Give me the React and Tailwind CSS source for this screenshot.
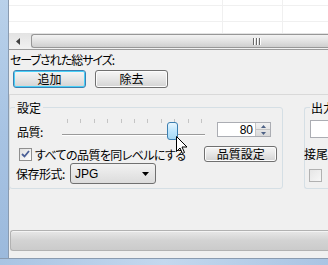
import React from "react";

const jp = { fontFamily: '"Noto Sans CJK JP", "Noto Sans", sans-serif' };

function Btn({ children, className = "", def = false }) {
  return (
    <div
      className={
        "flex items-center justify-center rounded-[3px] border bg-gradient-to-b from-[#f6f6f6] via-[#e6e6e6] to-[#d3d3d3] text-[12px] leading-none text-black " +
        (def ? "border-[#3c7fb1] shadow-[inset_0_0_0_1px_#48d0f8]" : "border-[#707070] shadow-[inset_0_0_0_1px_#fcfcfc]") +
        " " +
        className
      }
    >
      {children}
    </div>
  );
}

export default function App() {
  const ticks = [0, 1, 2, 3, 4, 5, 6, 7, 8, 9, 10];
  return (
    <div
      className="relative flex h-[265px] w-[328px] overflow-hidden bg-[#f0f0f0] text-black [font-feature-settings:'palt']"
      style={jp}
    >
      {/* left window frame */}
      <div className="w-[9px] shrink-0 bg-gradient-to-b from-[#b9d1ea] via-[#a7c3e3] to-[#9bb9dc] border-r border-[#8a9bb0]" />
      <div className="flex min-w-0 flex-1 flex-col">
        {/* list view */}
        <div className="relative h-[33px] shrink-0 bg-white">
          <div className="absolute left-0 right-0 top-[5px] h-px bg-[#f0f0f0]" />
          <div className="absolute left-0 right-0 top-[21px] h-px bg-[#f0f0f0]" />
          <div className="absolute bottom-0 top-0 left-[213px] w-px bg-[#f0f0f0]" />
          <div className="absolute bottom-0 top-0 left-[273px] w-px bg-[#f0f0f0]" />
        </div>
        {/* horizontal scrollbar */}
        <div className="flex h-[17px] shrink-0 items-stretch border-b border-[#9a9a9a] bg-gradient-to-b from-[#e3e3e3] to-[#f1f1f1]">
          <div className="flex w-[17px] items-center justify-center">
            <svg width="4" height="7" viewBox="0 0 4 7">
              <path d="M4 0 L0 3.5 L4 7 Z" fill="#404040" />
            </svg>
          </div>
          <div className="my-px ml-[5px] flex flex-1 items-center justify-start rounded-l-[3px] border border-r-0 border-[#979797] bg-gradient-to-b from-[#f3f3f3] via-[#e2e2e2] to-[#cfcfcf] pl-[221px]">
            <svg width="9" height="7" viewBox="0 0 9 7">
              <rect x="0" y="0" width="1" height="7" fill="#6a6a6a" />
              <rect x="3" y="0" width="1" height="7" fill="#6a6a6a" />
              <rect x="6" y="0" width="1" height="7" fill="#6a6a6a" />
              <rect x="1" y="0" width="1" height="7" fill="#ffffff" />
              <rect x="4" y="0" width="1" height="7" fill="#ffffff" />
              <rect x="7" y="0" width="1" height="7" fill="#ffffff" />
            </svg>
          </div>
        </div>

        <div className="mt-[3px] h-[13px] whitespace-nowrap pl-px text-[12px] leading-[13px] tracking-[-1px]">
          セーブされた総サイズ:
        </div>
        <div className="mt-[4px] flex gap-[9px] pl-[4px]">
          <Btn def className="h-[18px] w-[73px]">追加</Btn>
          <Btn className="h-[18px] w-[73px]">除去</Btn>
        </div>

        {/* lower panel */}
        <div className="mt-[6px] flex h-[96px] gap-[21px] border-l border-t border-[#d9d9d9] pt-[12px]">
          {/* 設定 group */}
          <div className="relative ml-[-1px] h-[82px] w-[274px] shrink-0 rounded-[3px] border border-[#d5dfe5]">
            <div className="absolute left-[5px] top-[-7px] bg-[#f0f0f0] px-[2px] text-[12px] leading-[13px]">
              設定
            </div>
            {/* quality row */}
            <div className="mt-[10px] flex items-start pl-[7px]">
              <div className="mt-[7px] w-[40px] text-[12px] leading-[13px] tracking-[-0.5px]">品質:</div>
              <div className="relative ml-[5px] h-[24px] w-[143px]">
                {ticks.map((t) => (
                  <div
                    key={t}
                    className="absolute top-[1px] h-[4px] w-px bg-[#c4c4c4]"
                    style={{ left: 5 + t * 13.4 }}
                  />
                ))}
                <div className="absolute left-0 right-0 top-[16px] h-[2px] border-t border-[#9a9a9a] bg-white" />
                <div className="absolute left-[105px] top-[4px] h-[18px] w-[11px] rounded-[3px] border border-[#3c7fb1] bg-gradient-to-b from-[#eaf6fd] via-[#bee6fd] to-[#a7d9f5]" />
              </div>
              <div className="ml-[12px] mt-[4px] flex h-[15px] w-[54px] border border-[#abadb3] bg-white">
                <div className="flex-1 pr-[2px] text-right text-[12px] leading-[14px]" style={{ fontFamily: '"Liberation Sans", sans-serif' }}>
                  80
                </div>
                <div className="flex w-[15px] flex-col border-l border-[#c5c5c5] bg-gradient-to-b from-[#f2f2f2] to-[#d9d9d9]">
                  <div className="flex flex-1 items-center justify-center border-b border-[#c5c5c5]">
                    <svg width="5" height="3" viewBox="0 0 5 3"><path d="M0 3 L2.5 0 L5 3 Z" fill="#4d6185" /></svg>
                  </div>
                  <div className="flex flex-1 items-center justify-center">
                    <svg width="5" height="3" viewBox="0 0 5 3"><path d="M0 0 L2.5 3 L5 0 Z" fill="#4d6185" /></svg>
                  </div>
                </div>
              </div>
            </div>
            {/* checkbox row */}
            <div className="mt-[4px] flex items-center pl-[9px]">
              <div className="flex h-[13px] w-[13px] items-center justify-center border border-[#8f8f8f] bg-gradient-to-br from-[#e0e0e0] to-[#ffffff]">
                <svg width="9" height="8" viewBox="0 0 9 8">
                  <path d="M1 4 L3.5 6.5 L8 1" stroke="#4a5f97" strokeWidth="1.8" fill="none" />
                </svg>
              </div>
              <div className="ml-[3px] whitespace-nowrap text-[12px] leading-[13px] tracking-[-0.6px]">すべての品質を同レベルにする</div>
              <Btn className="ml-[19px] h-[16px] w-[73px]">品質設定</Btn>
            </div>
            {/* save format row */}
            <div className="mt-[1px] flex items-center pl-[6px]">
              <div className="w-[54px] whitespace-nowrap text-[12px] leading-[13px] tracking-[-0.5px]">保存形式:</div>
              <div className="flex h-[21px] w-[86px] items-center rounded-[3px] border border-[#707070] bg-gradient-to-b from-[#f2f2f2] to-[#dcdcdc] pl-[4px] pr-[6px]">
                <div className="flex-1 text-[12px] leading-none" style={{ fontFamily: '"Liberation Sans", sans-serif' }}>JPG</div>
                <svg width="7" height="4" viewBox="0 0 7 4"><path d="M0 0 L3.5 4 L7 0 Z" fill="#000" /></svg>
              </div>
            </div>
          </div>
          {/* 出力 group */}
          <div className="relative h-[82px] min-w-0 flex-1 rounded-l-[3px] border border-r-0 border-[#d5dfe5]">
            <div className="absolute left-[5px] top-[-7px] whitespace-nowrap bg-[#f0f0f0] px-[1px] text-[12px] leading-[13px]">出力</div>
            <div className="ml-[5px] mt-[12px] h-[18px] border border-r-0 border-[#abadb3] bg-white" />
            <div className="ml-[-1px] mt-[9px] whitespace-nowrap text-[12px] leading-[13px]">接尾</div>
            <div className="ml-[4px] mt-[9px] h-[13px] w-[13px] border border-[#b1b1b1] bg-gradient-to-br from-[#e6e6e6] to-[#f7f7f7]" />
          </div>
        </div>

        <div className="flex-1" />
        {/* progress bar */}
        <div className="mb-[14px] ml-px h-[21px] rounded-l-[3px] border border-r-0 border-[#b2b2b2] bg-gradient-to-b from-[#e8e8e8] via-[#d3d3d3] to-[#cbcbcb] shadow-[inset_0_1px_0_#f4f4f4]" />
      </div>
      {/* bottom frame */}
      <div className="absolute bottom-0 left-0 right-0 h-[7px] border-t border-[#8a9bb0] bg-gradient-to-r from-[#a9c4e3] via-[#c4d8ee] to-[#a9c4e3]" />

      {/* mouse cursor */}
      <svg className="absolute left-[176px] top-[136px]" width="12" height="19" viewBox="0 0 12 19">
        <path d="M0.5 0.5 L0.5 15.5 L4 12 L6.5 17.5 L8.5 16.5 L6 11 L11 11 Z" fill="#fff" stroke="#000" strokeWidth="1" strokeLinejoin="miter" />
      </svg>
    </div>
  );
}
